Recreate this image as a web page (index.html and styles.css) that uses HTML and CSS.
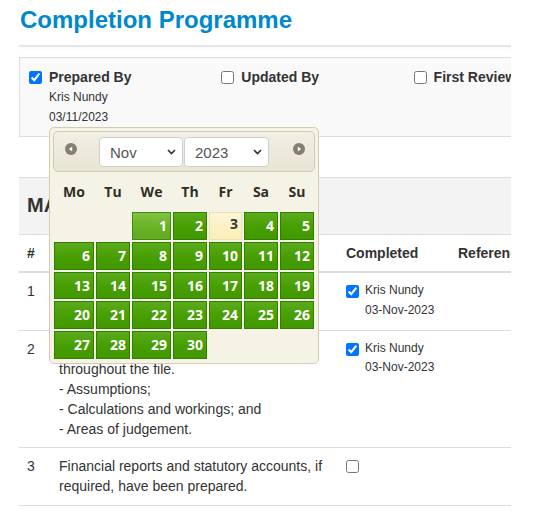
FILE: index.html
```html
<!DOCTYPE html>
<html lang="en">
<head>
<meta charset="utf-8">
<title>Completion Programme</title>
<link rel="stylesheet" href="styles.css">
</head>
<body>
<div class="page">
  <div class="viewport">
    <div class="sheet">
      <h1 class="title">Completion Programme</h1>
      <div class="rule"></div>

      <div class="signoff">
        <div class="signoff-col">
          <label class="signoff-label"><input type="checkbox" class="cb" checked><span>Prepared By</span></label>
          <div class="signoff-meta">Kris Nundy</div>
          <div class="signoff-meta">03/11/2023</div>
        </div>
        <div class="signoff-col">
          <label class="signoff-label"><input type="checkbox" class="cb"><span>Updated By</span></label>
        </div>
        <div class="signoff-col">
          <label class="signoff-label"><input type="checkbox" class="cb"><span>First Review</span></label>
        </div>
      </div>

      <div class="section">
        <div class="section-head">MANDATORY PROCEDURES</div>
        <table class="prog">
          <thead>
            <tr>
              <th class="c-num">#</th>
              <th class="c-desc">Procedure</th>
              <th class="c-done">Completed</th>
              <th class="c-ref">Reference</th>
            </tr>
          </thead>
          <tbody>
            <tr>
              <td>1</td>
              <td>All review points have been cleared and signed off by the reviewer.</td>
              <td>
                <div class="done">
                  <input type="checkbox" class="cb done-cb" checked>
                  <div class="done-meta"><div>Kris Nundy</div><div>03-Nov-2023</div></div>
                </div>
              </td>
              <td></td>
            </tr>
            <tr>
              <td>2</td>
              <td>The following are clearly documented throughout the file.<br>- Assumptions;<br>- Calculations and workings; and<br>- Areas of judgement.</td>
              <td>
                <div class="done">
                  <input type="checkbox" class="cb done-cb" checked>
                  <div class="done-meta"><div>Kris Nundy</div><div>03-Nov-2023</div></div>
                </div>
              </td>
              <td></td>
            </tr>
            <tr>
              <td>3</td>
              <td>Financial reports and statutory accounts, if required, have been prepared.</td>
              <td>
                <div class="done">
                  <input type="checkbox" class="cb done-cb">
                </div>
              </td>
              <td></td>
            </tr>
          </tbody>
        </table>
      </div>
    </div>
  </div>

  <div class="dp">
    <div class="dp-head">
      <span class="dp-nav dp-prev"><svg width="12" height="12" viewBox="0 0 12 12"><circle cx="6" cy="6" r="6" fill="#847e71"/><path d="M7.2 3.4 L3.8 6 L7.2 8.6 Z" fill="#fff"/></svg></span>
      <div class="dp-select dp-month">
        <select class="dp-select-input"><option>Nov</option></select>
        <svg class="dp-chev" width="9" height="6" viewBox="0 0 9 6"><path d="M1 1 L4.5 4.5 L8 1" fill="none" stroke="#333" stroke-width="1.7"/></svg>
      </div>
      <div class="dp-select dp-year">
        <select class="dp-select-input"><option>2023</option></select>
        <svg class="dp-chev" width="9" height="6" viewBox="0 0 9 6"><path d="M1 1 L4.5 4.5 L8 1" fill="none" stroke="#333" stroke-width="1.7"/></svg>
      </div>
      <span class="dp-nav dp-next"><svg width="12" height="12" viewBox="0 0 12 12"><circle cx="6" cy="6" r="6" fill="#847e71"/><path d="M4.8 3.4 L8.2 6 L4.8 8.6 Z" fill="#fff"/></svg></span>
    </div>
    <div class="dp-body">
      <div class="dp-dow">
        <span>Mo</span><span>Tu</span><span>We</span><span>Th</span><span>Fr</span><span>Sa</span><span>Su</span>
      </div>
      <div class="dp-days">
        <span></span><span></span>
        <a class="dp-day dp-hover">1</a><a class="dp-day">2</a><a class="dp-day dp-today">3</a><a class="dp-day">4</a><a class="dp-day">5</a>
        <a class="dp-day">6</a><a class="dp-day">7</a><a class="dp-day">8</a><a class="dp-day">9</a><a class="dp-day">10</a><a class="dp-day">11</a><a class="dp-day">12</a>
        <a class="dp-day">13</a><a class="dp-day">14</a><a class="dp-day">15</a><a class="dp-day">16</a><a class="dp-day">17</a><a class="dp-day">18</a><a class="dp-day">19</a>
        <a class="dp-day">20</a><a class="dp-day">21</a><a class="dp-day">22</a><a class="dp-day">23</a><a class="dp-day">24</a><a class="dp-day">25</a><a class="dp-day">26</a>
        <a class="dp-day">27</a><a class="dp-day">28</a><a class="dp-day">29</a><a class="dp-day">30</a>
      </div>
    </div>
  </div>
</div>
</body>
</html>
```

FILE: styles.css
```css
* { box-sizing: border-box; }

body {
  margin: 0;
  background: #fff;
  color: #333;
  font-family: "Liberation Sans", Arial, sans-serif;
  font-size: 14px;
}

.page {
  position: relative;
  padding: 6px 0 0 19px;
}

.viewport {
  width: 492px;
  overflow: hidden;
}

.sheet {
  width: 640px;
}

.title {
  margin: 0 0 0 1px;
  font-size: 24px;
  line-height: 28px;
  font-weight: bold;
  color: #0088cc;
}

.rule {
  margin-top: 11px;
  border-top: 2px solid #e6e6e6;
  box-shadow: 0 1px 3px rgba(0, 0, 0, 0.04);
}

/* sign-off panel */
.signoff {
  margin-top: 10px;
  border: 1px solid #ddd;
  background: #f9f9f9;
  padding: 9px 9px 9px;
  display: grid;
  grid-template-columns: repeat(3, 192.3px);
}

.signoff-label {
  display: flex;
  align-items: center;
  gap: 7px;
  font-weight: bold;
  line-height: 20px;
  white-space: nowrap;
}

.cb {
  margin: 0;
  width: 13px;
  height: 13px;
  flex: none;
}

.signoff-meta {
  padding-left: 20px;
  font-size: 12px;
  line-height: 20px;
}

/* section */
.section {
  margin-top: 40px;
}

.section-head {
  border-top: 1px solid #ddd;
  border-bottom: 1px solid #ddd;
  background: #f3f3f3;
  padding: 15px 8px 17px;
  font-size: 20px;
  line-height: 24px;
  font-weight: bold;
  white-space: nowrap;
}

.prog {
  width: 640px;
  table-layout: fixed;
  border-collapse: separate;
  border-spacing: 0;
}

.prog th {
  text-align: left;
  font-weight: bold;
  padding: 8px;
  line-height: 20px;
  border-bottom: 2px solid #ddd;
  white-space: nowrap;
}

.prog td {
  vertical-align: top;
  padding: 8px 8px 8.6px;
  line-height: 20px;
  border-top: 1px solid #ddd;
}

.prog tbody tr:first-child td {
  border-top: 0;
}

.prog tbody tr:last-child td {
  border-bottom: 1px solid #ddd;
}

.c-num { width: 32px; }
.c-desc { width: 287px; }
.c-done { width: 112px; }

.done {
  display: flex;
  align-items: flex-start;
  gap: 6px;
}

.done-cb {
  margin-top: 4px;
}

.done-meta {
  font-size: 12px;
  line-height: 19.5px;
  white-space: nowrap;
}

/* datepicker */
.dp {
  position: absolute;
  left: 49px;
  top: 127px;
  width: 270px;
  padding: 3px;
  border: 1px solid #d4ccb0;
  border-radius: 5px;
  background: #f5f3e5;
  font-family: "Open Sans", "DejaVu Sans", sans-serif;
}

.dp-head {
  display: flex;
  align-items: center;
  height: 41px;
  border: 1px solid #d4ccb0;
  border-radius: 5px;
  background: linear-gradient(#f2efe6, #ece8da 55%, #e9e5d6);
}

.dp-nav {
  display: flex;
  align-self: flex-start;
  margin-top: 11px;
  width: 12px;
  height: 12px;
}

.dp-prev { margin-left: 11px; }
.dp-next { margin-left: 24px; }

.dp-select {
  display: flex;
  align-items: center;
  height: 30px;
  border: 1px solid #cfcfcf;
  border-radius: 4px;
  background: #fff;
}

.dp-month { width: 84px; margin-left: 22px; }
.dp-year { width: 85px; margin-left: 1px; }

.dp-select-input {
  appearance: none;
  -webkit-appearance: none;
  flex: 1;
  min-width: 0;
  height: 100%;
  border: 0;
  background: transparent;
  padding: 1px 0 0 10px;
  font-family: "Liberation Sans", Arial, sans-serif;
  font-size: 15px;
  color: #555;
  outline: none;
}

.dp-chev {
  flex: none;
  margin-right: 6px;
}

.dp-body {
  padding: 0 1px;
}

.dp-dow,
.dp-days {
  display: grid;
  grid-template-columns: 40px 34px 39px 34px 33px 34px 34px;
  column-gap: 2px;
}

.dp-dow {
  height: 39px;
  align-items: center;
  text-align: center;
  font-weight: bold;
  font-size: 14px;
  color: #312e25;
}

.dp-days {
  row-gap: 2px;
  grid-auto-rows: 27.75px;
  margin: 1px 0 1px;
}

.dp-day {
  display: block;
  border: 1px solid #327e04;
  background: linear-gradient(#5bab1d, #489f02 50%, #419800);
  color: #fff;
  font-weight: bold;
  font-size: 14px;
  text-align: right;
  padding: 1px 3px 0 0;
  line-height: 24.75px;
  text-decoration: none;
}

.dp-hover {
  border-color: #418b14;
  background: linear-gradient(#82c244, #6ab226 50%, #62ab20);
}

.dp-today {
  border-color: #ebe1b4;
  background: linear-gradient(#fdf6d8, #fcf1c4 50%, #fcefb6);
  color: #363636;
  padding-top: 0;
  line-height: 22.75px;
}
```
